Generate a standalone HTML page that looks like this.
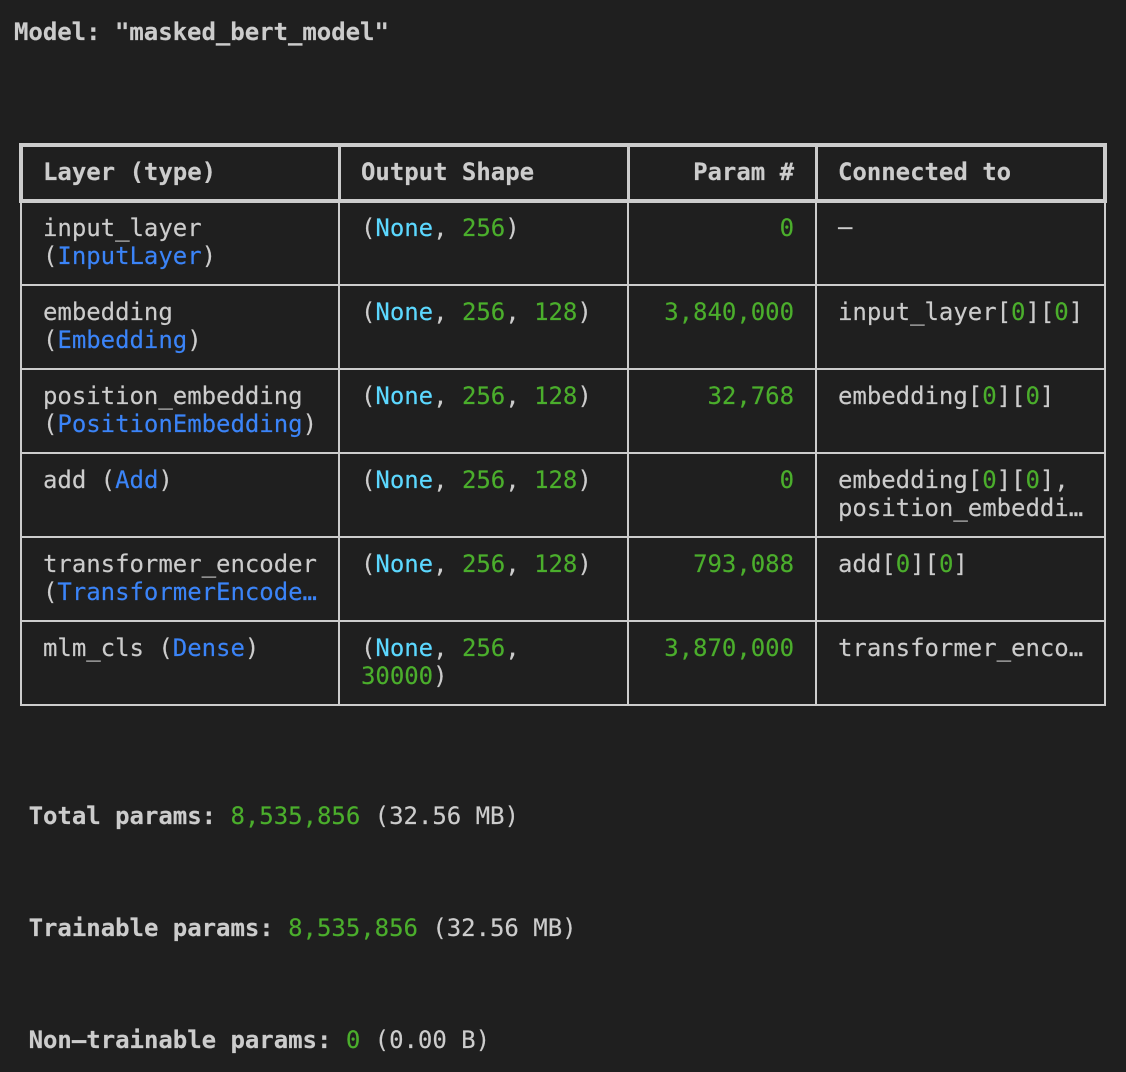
<!DOCTYPE html>
<html><head><meta charset="utf-8"><style>
html,body{margin:0;padding:0;background:#1f1f1f;}
body{width:1126px;height:1072px;position:relative;overflow:hidden;font-family:"DejaVu Sans Mono","Liberation Mono",monospace;font-size:24px;line-height:28px;color:#cccccc;letter-spacing:-0.03px;-webkit-text-stroke:0.15px currentColor;}
.t{position:absolute;white-space:pre;height:28px;}
.r{position:absolute;white-space:pre;height:28px;right:332px;text-align:right;}
.l{position:absolute;background:#cccccc;}
b{font-weight:bold;}
.g{color:#4bae2c;}
.c{color:#5cd8ff;}
.u{color:#3b84f8;}
</style></head><body>
<div class="t" style="left:14px;top:18px"><b>Model: "masked_bert_model"</b></div>

<div class="l" style="left:19px;top:143px;width:1088px;height:4px"></div>
<div class="l" style="left:19px;top:199px;width:1088px;height:4px"></div>
<div class="l" style="left:19px;top:143px;width:4px;height:60px"></div>
<div class="l" style="left:338px;top:143px;width:3px;height:60px"></div>
<div class="l" style="left:627px;top:143px;width:3px;height:60px"></div>
<div class="l" style="left:815px;top:143px;width:3px;height:60px"></div>
<div class="l" style="left:1103px;top:143px;width:4px;height:60px"></div>

<div class="l" style="left:20px;top:203px;width:2px;height:503px"></div>
<div class="l" style="left:338px;top:203px;width:2px;height:503px"></div>
<div class="l" style="left:627px;top:203px;width:2px;height:503px"></div>
<div class="l" style="left:815px;top:203px;width:2px;height:503px"></div>
<div class="l" style="left:1104px;top:203px;width:2px;height:503px"></div>

<div class="l" style="left:20px;top:284px;width:1086px;height:2px"></div>
<div class="l" style="left:20px;top:368px;width:1086px;height:2px"></div>
<div class="l" style="left:20px;top:452px;width:1086px;height:2px"></div>
<div class="l" style="left:20px;top:536px;width:1086px;height:2px"></div>
<div class="l" style="left:20px;top:620px;width:1086px;height:2px"></div>
<div class="l" style="left:20px;top:704px;width:1086px;height:2px"></div>

<div class="t" style="left:43px;top:158px"><b>Layer (type)</b></div>
<div class="t" style="left:361px;top:158px"><b>Output Shape</b></div>
<div class="r" style="top:158px"><b>Param #</b></div>
<div class="t" style="left:838px;top:158px"><b>Connected to</b></div>

<div class="t" style="left:43px;top:214px">input_layer</div>
<div class="t" style="left:43px;top:242px">(<span class="u">InputLayer</span>)</div>
<div class="t" style="left:361px;top:214px">(<span class="c">None</span>, <span class="g">256</span>)</div>
<div class="r g" style="top:214px">0</div>
<div class="t" style="left:838px;top:213px">–</div>

<div class="t" style="left:43px;top:298px">embedding</div>
<div class="t" style="left:43px;top:326px">(<span class="u">Embedding</span>)</div>
<div class="t" style="left:361px;top:298px">(<span class="c">None</span>, <span class="g">256</span>, <span class="g">128</span>)</div>
<div class="r g" style="top:298px">3,840,000</div>
<div class="t" style="left:838px;top:298px">input_layer[<span class="g">0</span>][<span class="g">0</span>]</div>

<div class="t" style="left:43px;top:382px">position_embedding</div>
<div class="t" style="left:43px;top:410px">(<span class="u">PositionEmbedding</span>)</div>
<div class="t" style="left:361px;top:382px">(<span class="c">None</span>, <span class="g">256</span>, <span class="g">128</span>)</div>
<div class="r g" style="top:382px">32,768</div>
<div class="t" style="left:838px;top:382px">embedding[<span class="g">0</span>][<span class="g">0</span>]</div>

<div class="t" style="left:43px;top:466px">add (<span class="u">Add</span>)</div>
<div class="t" style="left:361px;top:466px">(<span class="c">None</span>, <span class="g">256</span>, <span class="g">128</span>)</div>
<div class="r g" style="top:466px">0</div>
<div class="t" style="left:838px;top:466px">embedding[<span class="g">0</span>][<span class="g">0</span>],</div>
<div class="t" style="left:838px;top:494px">position_embeddi…</div>

<div class="t" style="left:43px;top:550px">transformer_encoder</div>
<div class="t" style="left:43px;top:578px">(<span class="u">TransformerEncode…</span></div>
<div class="t" style="left:361px;top:550px">(<span class="c">None</span>, <span class="g">256</span>, <span class="g">128</span>)</div>
<div class="r g" style="top:550px">793,088</div>
<div class="t" style="left:838px;top:550px">add[<span class="g">0</span>][<span class="g">0</span>]</div>

<div class="t" style="left:43px;top:634px">mlm_cls (<span class="u">Dense</span>)</div>
<div class="t" style="left:361px;top:634px">(<span class="c">None</span>, <span class="g">256</span>,</div>
<div class="t" style="left:361px;top:662px"><span class="g">30000</span>)</div>
<div class="r g" style="top:634px">3,870,000</div>
<div class="t" style="left:838px;top:634px">transformer_enco…</div>

<div class="t" style="left:28.6px;top:802px"><b>Total params: </b><span class="g">8,535,856</span> (32.56 MB)</div>
<div class="t" style="left:28.6px;top:914px"><b>Trainable params: </b><span class="g">8,535,856</span> (32.56 MB)</div>
<div class="t" style="left:28.6px;top:1026px"><b>Non–trainable params: </b><span class="g">0</span> (0.00 B)</div>
</body></html>
